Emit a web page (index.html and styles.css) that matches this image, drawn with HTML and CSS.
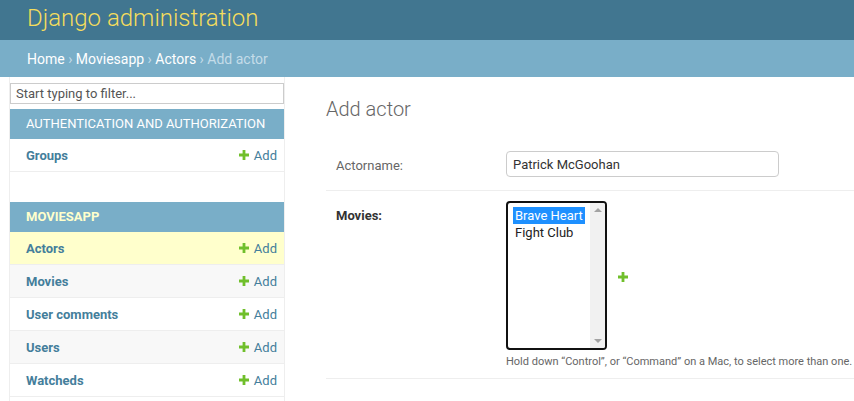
FILE: index.html
```html
<!DOCTYPE html>
<html lang="en">
<head>
    <meta charset="UTF-8">
    <title>Add actor | Django site admin</title>
    <link rel="stylesheet" href="styles.css">
</head>
<body>
    <header class="header">
        <div class="site-name">Django administration</div>
    </header>
    <nav class="breadcrumbs">
        <a href="#">Home</a> › <a href="#">Moviesapp</a> › <a href="#">Actors</a> › Add actor
    </nav>

    <div class="main">
        <div class="toggle-strip"></div>
        <aside class="sidebar">
            <input class="nav-filter" type="search" placeholder="Start typing to filter...">

            <div class="module">
                <div class="caption">Authentication and Authorization</div>
                <div class="model-row">
                    <a class="model-name" href="#">Groups</a>
                    <a class="addlink" href="#"><svg viewBox="0 0 10 10"><path d="M3.6 0h2.8v3.6H10v2.8H6.4V10H3.6V6.4H0V3.6h3.6z"/></svg>Add</a>
                </div>
            </div>

            <div class="module current-app">
                <div class="caption">Moviesapp</div>
                <div class="model-row current-model">
                    <a class="model-name" href="#">Actors</a>
                    <a class="addlink" href="#"><svg viewBox="0 0 10 10"><path d="M3.6 0h2.8v3.6H10v2.8H6.4V10H3.6V6.4H0V3.6h3.6z"/></svg>Add</a>
                </div>
                <div class="model-row">
                    <a class="model-name" href="#">Movies</a>
                    <a class="addlink" href="#"><svg viewBox="0 0 10 10"><path d="M3.6 0h2.8v3.6H10v2.8H6.4V10H3.6V6.4H0V3.6h3.6z"/></svg>Add</a>
                </div>
                <div class="model-row">
                    <a class="model-name" href="#">User comments</a>
                    <a class="addlink" href="#"><svg viewBox="0 0 10 10"><path d="M3.6 0h2.8v3.6H10v2.8H6.4V10H3.6V6.4H0V3.6h3.6z"/></svg>Add</a>
                </div>
                <div class="model-row">
                    <a class="model-name" href="#">Users</a>
                    <a class="addlink" href="#"><svg viewBox="0 0 10 10"><path d="M3.6 0h2.8v3.6H10v2.8H6.4V10H3.6V6.4H0V3.6h3.6z"/></svg>Add</a>
                </div>
                <div class="model-row">
                    <a class="model-name" href="#">Watcheds</a>
                    <a class="addlink" href="#"><svg viewBox="0 0 10 10"><path d="M3.6 0h2.8v3.6H10v2.8H6.4V10H3.6V6.4H0V3.6h3.6z"/></svg>Add</a>
                </div>
            </div>
        </aside>

        <section class="content">
            <h1>Add actor</h1>
            <form>
                <div class="form-row">
                    <label for="id_actorname">Actorname:</label>
                    <input class="text-field" type="text" id="id_actorname" value="Patrick McGoohan">
                </div>
                <div class="form-row">
                    <label class="required">Movies:</label>
                    <div class="field">
                        <div class="related-widget">
                            <div class="listbox" role="listbox">
                                <div class="options">
                                    <div class="option selected">Brave Heart</div>
                                    <div class="option">Fight Club</div>
                                </div>
                                <div class="scrollbar">
                                    <span class="arrow up"></span>
                                    <span class="arrow down"></span>
                                </div>
                            </div>
                            <a class="add-related" href="#"><svg viewBox="0 0 10 10"><path d="M3.6 0h2.8v3.6H10v2.8H6.4V10H3.6V6.4H0V3.6h3.6z"/></svg></a>
                        </div>
                        <div class="help">Hold down “Control”, or “Command” on a Mac, to select more than one.</div>
                    </div>
                </div>
            </form>
        </section>
    </div>
</body>
</html>
```

FILE: styles.css
```css
body { margin: 0; padding: 0; font-family: Roboto, "Liberation Sans", sans-serif; font-size: 14px; color: #333; background: #fff; }
a { text-decoration: none; }

.header { height: 40px; background: #417690; display: flex; align-items: center; padding: 0 27px; box-sizing: border-box; }
.site-name { font-size: 24px; font-weight: 300; color: #f5dd5d; margin-top: -4px; }

.breadcrumbs { background: #79aec8; color: #c4dce8; padding: 11px 27px 9px; line-height: 17px; font-size: 14px; }
.breadcrumbs a { color: #fff; }

.main { display: flex; }
.toggle-strip { width: 9px; flex-shrink: 0; border-right: 1px solid #eee; }
.sidebar { width: 274px; flex-shrink: 0; border-right: 1px solid #eee; padding-bottom: 20px; }

.nav-filter { display: block; width: 100%; box-sizing: border-box; margin: 6px 0 5px; padding: 2px 5px; height: 21px; border: 1px solid #ccc; font-family: inherit; font-size: 13px; color: #333; background: #fff; }
.nav-filter::placeholder { color: #555; }

.module { margin-bottom: 30px; }
.caption { background: #79aec8; color: #fff; padding: 7px 16px; line-height: 16px; font-size: 13px; text-transform: uppercase; letter-spacing: 0; white-space: nowrap; }
.current-app .caption { color: #ffc; font-weight: bold; }

.model-row { display: flex; justify-content: space-between; align-items: center; height: 32px; padding: 0 7px 0 16px; border-bottom: 1px solid #eee; font-size: 13px; }
.model-row:nth-child(odd) { background: #f8f8f8; }
.model-row.current-model { background: #ffc; }
.model-name { color: #447e9b; font-weight: bold; }
.addlink { color: #447e9b; display: flex; align-items: center; }
.addlink svg { width: 10px; height: 10px; fill: #70bf2b; margin-right: 5px; }

.content { flex: 1; min-width: 0; padding: 20px 0 0 41px; }
.content h1 { margin: 0 0 20px; font-size: 20px; font-weight: 300; color: #666; line-height: 24px; }

.form-row { display: flex; padding: 10px; border-bottom: 1px solid #eee; font-size: 13px; }
.form-row label { width: 160px; flex-shrink: 0; padding: 7px 10px 0 0; line-height: 16px; color: #666; }
.form-row label.required { color: #333; font-weight: bold; }

.text-field { width: 273px; height: 26px; box-sizing: border-box; border: 1px solid #ccc; border-radius: 4px; padding: 5px 6px; margin-bottom: 3px; font-family: inherit; font-size: 13px; color: #333; }

.related-widget { display: flex; align-items: center; }
.listbox { display: flex; width: 101px; height: 149px; box-sizing: border-box; border: 2px solid #111; border-radius: 4px; background: #fff; overflow: hidden; }
.options { flex: 1; padding: 4px 0 0 5px; }
.option { display: inline-block; padding: 0 2px; line-height: 17px; color: #222; }
.option.selected { background: #1e90ff; color: #fff; }
.scrollbar { width: 15px; background: #f1f1f1; display: flex; flex-direction: column; justify-content: space-between; align-items: center; padding: 5px 0; }
.arrow { width: 0; height: 0; border-left: 4px solid transparent; border-right: 4px solid transparent; }
.arrow.up { border-bottom: 4px solid #a3a3a3; }
.arrow.down { border-top: 4px solid #a3a3a3; }
.add-related { display: flex; margin: 3px 0 0 11px; }
.add-related svg { width: 10px; height: 10px; fill: #70bf2b; }

.help { margin-top: 5px; font-size: 11px; line-height: 13px; color: #666; white-space: nowrap; }
```
